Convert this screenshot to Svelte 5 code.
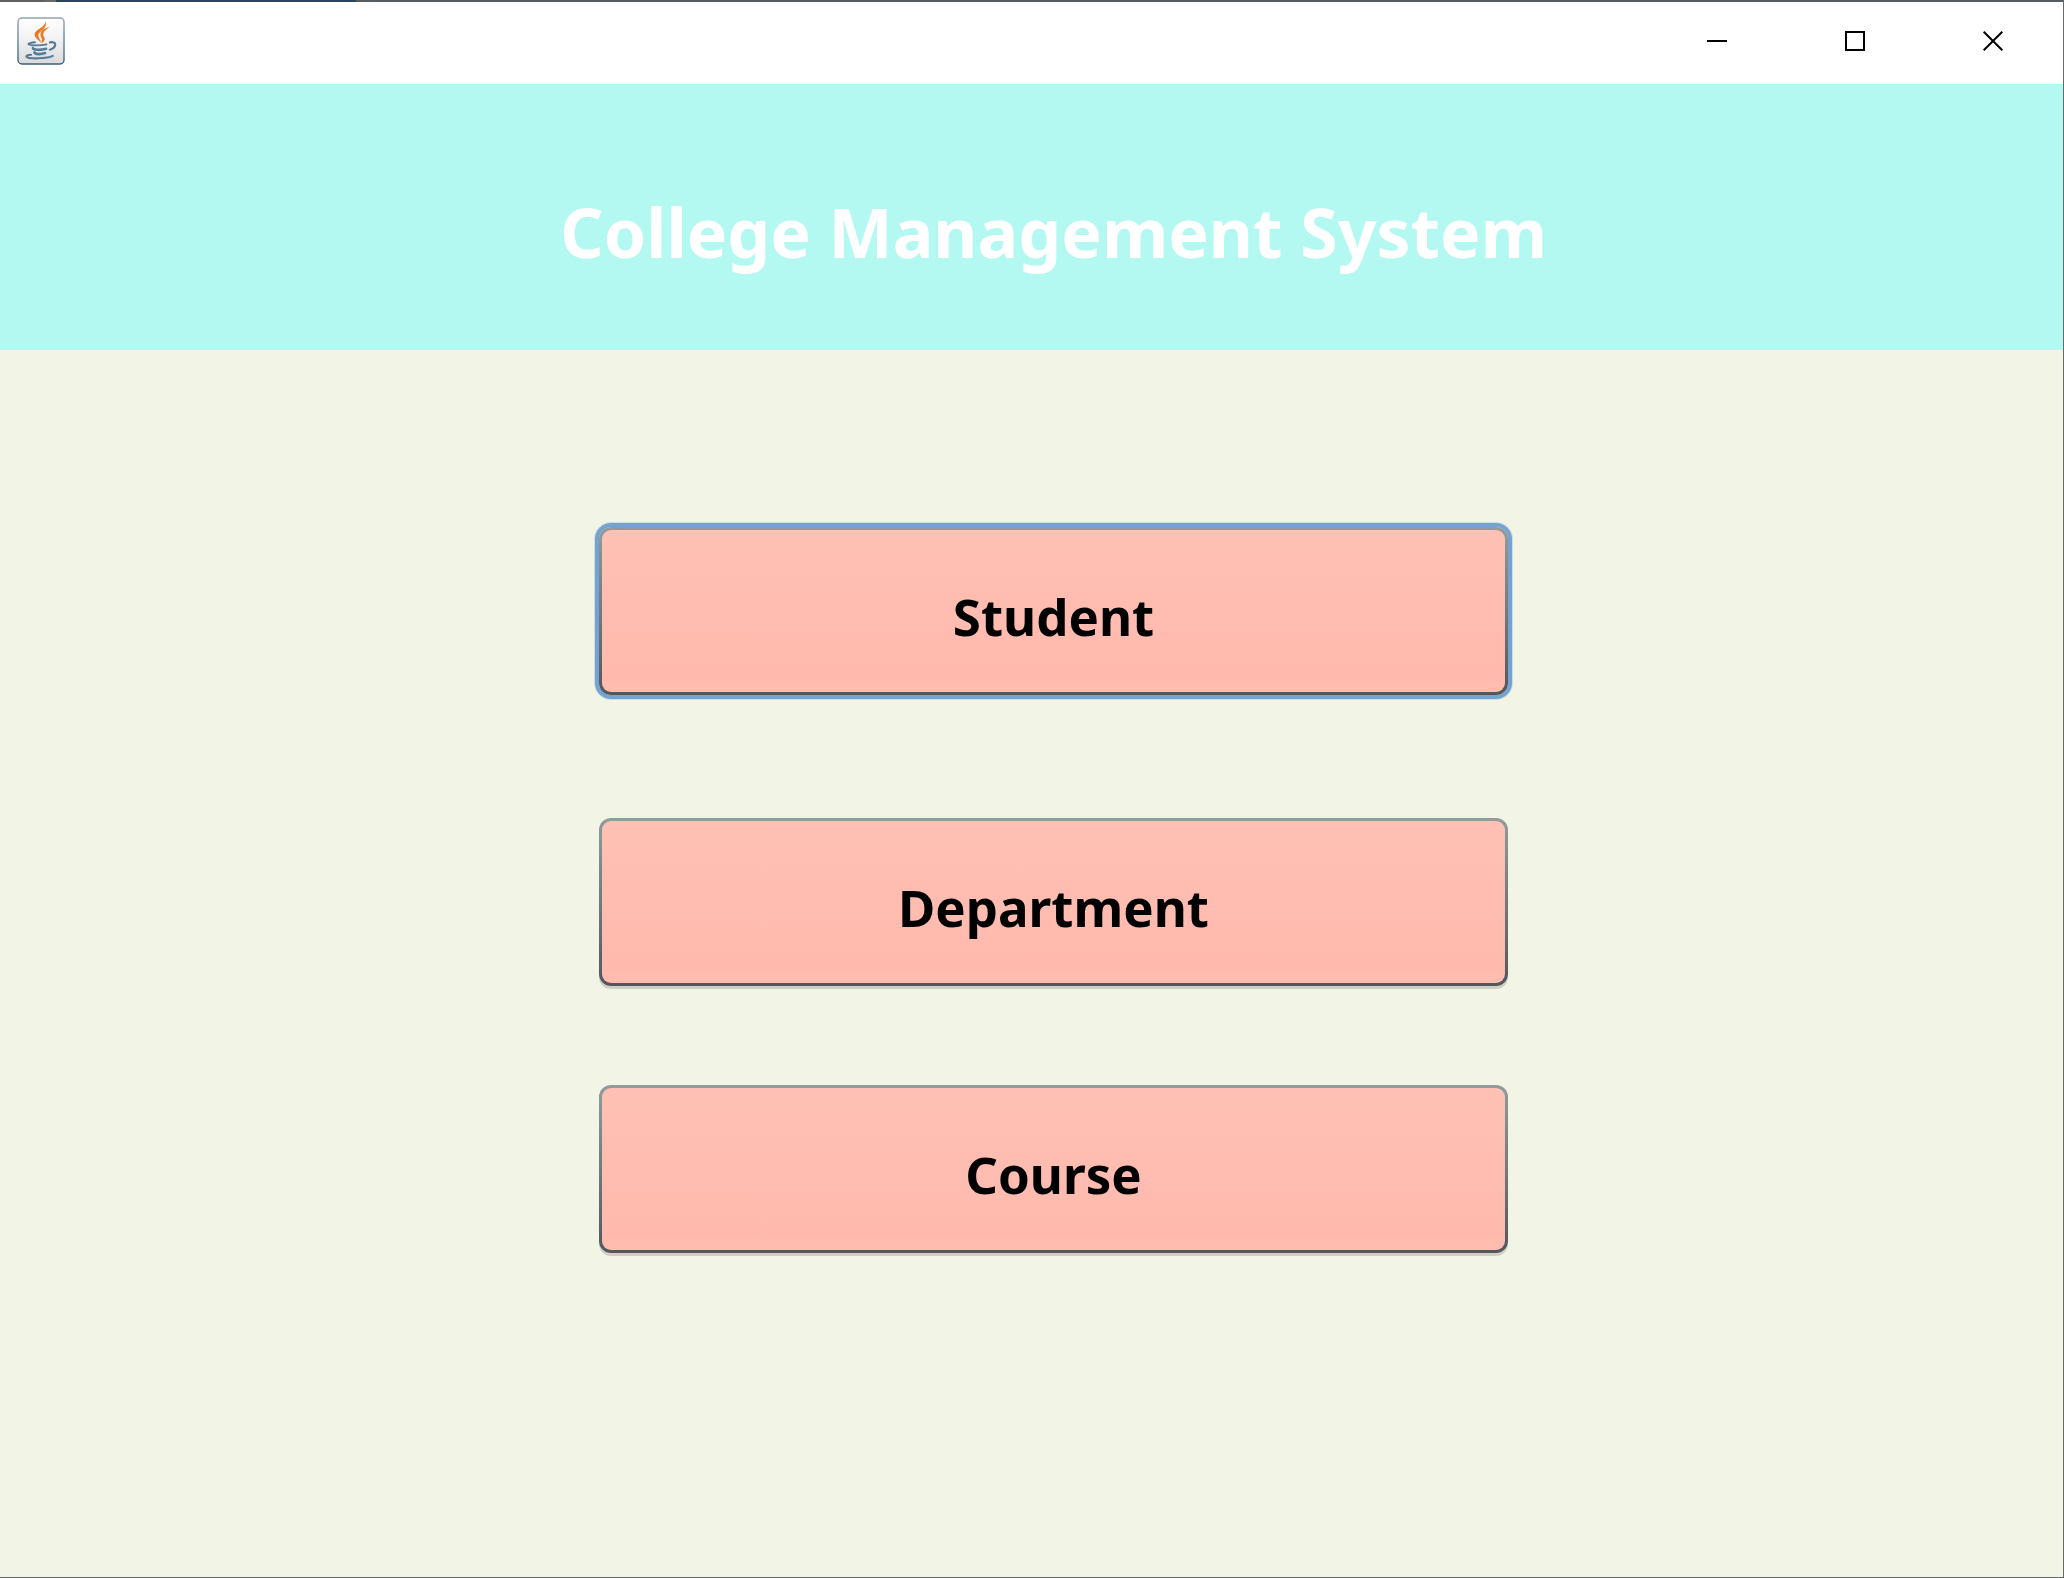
<script>
  const sections = [
    { id: 'student', label: 'Student' },
    { id: 'department', label: 'Department' },
    { id: 'course', label: 'Course' }
  ];
  let selected = $state('student');
</script>

<div class="window">
  <header class="titlebar">
    <svg class="java" viewBox="0 0 48 48" aria-hidden="true">
      <defs>
        <linearGradient id="tile" x1="0" y1="0" x2="0" y2="1">
          <stop offset="0" stop-color="#ffffff" />
          <stop offset="0.5" stop-color="#f0f0f1" />
          <stop offset="1" stop-color="#d9dadc" />
        </linearGradient>
        <linearGradient id="rim" x1="0" y1="0" x2="0" y2="1">
          <stop offset="0" stop-color="#93a4b0" />
          <stop offset="1" stop-color="#39617f" />
        </linearGradient>
      </defs>
      <rect x="1" y="1" width="46" height="46" rx="4" fill="url(#tile)" stroke="url(#rim)" stroke-width="1.4" />
      <g fill="#e87a24">
        <path d="M28 4C30 9.500 17.600 12.500 17.600 17.600c0 3.400 3.800 5.400 7.200 8.600-1.800-4-3.800-5.900-3.400-8.400C22.200 14 32 10.500 28 4z" />
        <path d="M32.500 10c-5.600 1.300-9.600 4.300-9 8 .3 2.100 2 3.200 1.300 8.200 3.200-2.300 3.600-4.400 2.200-6.400-2.300-3.500.8-6.500 5.500-9.800z" />
      </g>
      <g fill="none" stroke="#557b9b" stroke-linecap="round">
        <path d="M18 25.300c-4 .3-6.800 1.100-6.500 1.900.6 1.600 12.500 1.500 18 .2" stroke-width="1.900" />
        <path d="M33 25.400c3-.8 5.400.1 5.200 2.200-.2 2.300-2.800 4.300-5.400 5.100" stroke-width="2.200" />
        <path d="M16 31.200c-.5 1.900 8 2.100 13 .6" stroke-width="2.700" />
        <path d="M17.500 35.500c.6 1.900 6.600 2 10.500.6" stroke-width="2.700" />
        <path d="M14 37.700c-3 .2-5 1.200-4.500 2 1.400 2.400 21 2.200 26.300-.8" stroke-width="2.100" />
      </g>
    </svg>
    <div class="controls">
      <button type="button" aria-label="Minimize">
        <svg viewBox="0 0 20 20"><path d="M0 10h20" /></svg>
      </button>
      <button type="button" aria-label="Maximize">
        <svg viewBox="0 0 20 20"><path d="M1 1h18v18H1z" /></svg>
      </button>
      <button type="button" aria-label="Close">
        <svg viewBox="0 0 20 20"><path d="M.7.7l18.600 18.600M19.300.7L.7 19.300" /></svg>
      </button>
    </div>
  </header>

  <div class="banner">
    <h1>College Management System</h1>
  </div>

  <main>
    {#each sections as section (section.id)}
      <button
        type="button"
        class={['section', section.id, selected === section.id && 'selected']}
        onclick={() => (selected = section.id)}
      >
        {section.label}
      </button>
    {/each}
  </main>
</div>

<style>
  :global(body) {
    margin: 0;
  }

  .window {
    box-sizing: border-box;
    display: flex;
    flex-direction: column;
    min-height: 100vh;
    border-right: 1px solid #66696a;
    border-bottom: 1px solid #66696a;
    background: #f2f4e6;
    font-family: 'Segoe UI', 'Noto Sans', 'Open Sans', sans-serif;
  }

  .titlebar {
    box-sizing: border-box;
    display: flex;
    align-items: center;
    justify-content: space-between;
    height: 84px;
    padding: 0 1px 2px 17px;
    background:
      linear-gradient(90deg, #625f5f 44px, #6b6867 44px 56px, #2b425b 56px 356px, #595c5f 356px) top / 100% 2px no-repeat,
      #fff;
  }

  .java {
    width: 48px;
    height: 48px;
  }

  .controls {
    display: flex;
  }

  .controls button {
    display: flex;
    align-items: center;
    justify-content: center;
    width: 138px;
    height: 80px;
    padding: 0;
    border: 0;
    background: none;
  }

  .controls svg {
    width: 20px;
    height: 20px;
    fill: none;
    stroke: #000;
    stroke-width: 2;
  }

  .banner {
    box-sizing: border-box;
    display: flex;
    align-items: center;
    justify-content: center;
    min-height: 266px;
    padding: 30px 0 0 44px;
    background: #b3f9f1;
  }

  h1 {
    margin: 0;
    color: #fff;
    font-size: 68px;
    font-weight: 700;
    line-height: 96px;
  }

  main {
    display: flex;
    flex: 1;
    flex-direction: column;
    align-items: center;
    padding: 177px 0 100px 44px;
  }

  .section {
    box-sizing: border-box;
    width: 100%;
    max-width: 909px;
    height: 168px;
    padding: 10px 0 0;
    border: 3px solid transparent;
    border-radius: 12px;
    background:
      linear-gradient(#ffc1b5, #ffbcb0 50%, #ffbaad 90%, #ffbdb0) padding-box,
      linear-gradient(#939b9d, #53575b) border-box;
    box-shadow: 0 3px 0 #ced0c5;
    color: #000;
    font-family: inherit;
    font-size: 51px;
    font-weight: 700;
    line-height: 72px;
  }

  .selected {
    outline: none;
    box-shadow:
      0 0 0 4px #73a3d2,
      0 0 0 5px #cfdde0;
  }

  .department {
    margin-top: 123px;
  }

  .course {
    margin-top: 99px;
  }
</style>
